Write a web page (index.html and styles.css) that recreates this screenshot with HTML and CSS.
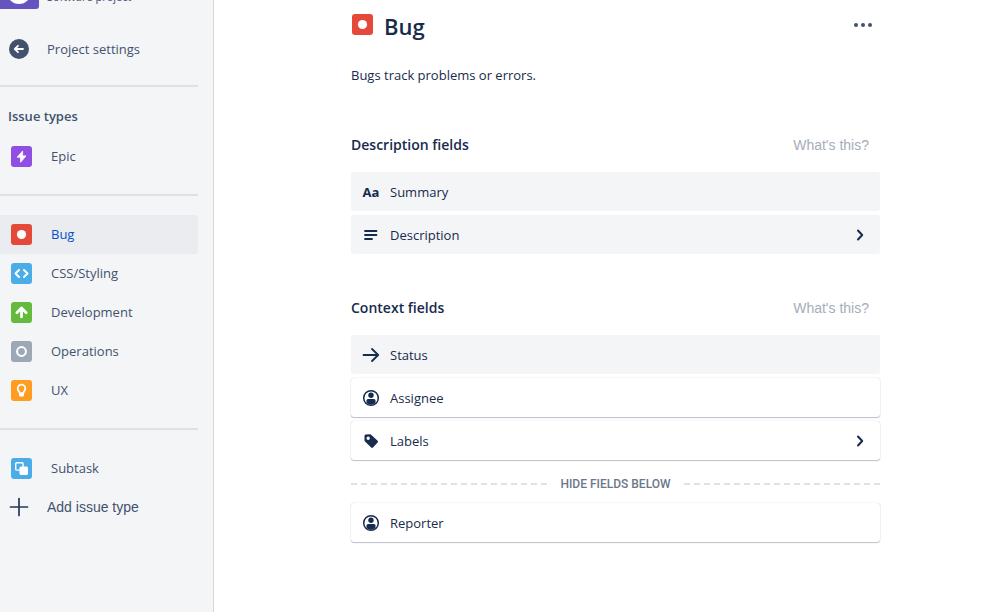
FILE: index.html
```
<!DOCTYPE html>
<html lang="en">
<head>
  <meta charset="UTF-8">
  <meta name="viewport" content="width=device-width, initial-scale=1.0">
  <title>Bug - Issue types</title>
  <link rel="stylesheet" href="styles.css">
</head>
<body>

  <!-- Sidebar -->
  <aside class="sidebar">
    <div class="project">
      <svg class="avatar" viewBox="0 0 39 39">
        <rect x="-3" width="42" height="39" rx="3" fill="#6554c0"/>
        <circle cx="19" cy="22" r="12" fill="#fff"/>
      </svg>
      <span>Software project</span>
    </div>

    <nav>
      <a class="nav-link" href="#">
        <svg viewBox="0 0 20 20">
          <circle cx="10" cy="10" r="10" fill="#42526e"/>
          <path d="M14 10H6.2M9 6.8L5.8 10L9 13.2" fill="none" stroke="#fff" stroke-width="1.8" stroke-linecap="round" stroke-linejoin="round"/>
        </svg>
        Project settings
      </a>
      <hr class="first">

      <h2>Issue types</h2>
      <a class="issue-type" href="#">
        <svg viewBox="0 0 21 21">
          <rect width="21" height="21" rx="3" fill="#904ee2"/>
          <path d="M11.6 5L6.2 11.2H9.6V16.3L15 9.9H11.6Z" fill="#fff" stroke="#fff" stroke-width=".8" stroke-linejoin="round"/>
        </svg>
        Epic
      </a>
      <hr>

      <a class="issue-type active" href="#">
        <svg viewBox="0 0 21 21">
          <rect width="21" height="21" rx="3" fill="#e5493a"/>
          <circle cx="10.5" cy="10.5" r="4.6" fill="#fff"/>
        </svg>
        Bug
      </a>
      <a class="issue-type" href="#">
        <svg viewBox="0 0 21 21">
          <rect width="21" height="21" rx="3" fill="#4bade8"/>
          <path d="M8 7L4.5 10.5L8 14M13 7L16.5 10.5L13 14" fill="none" stroke="#fff" stroke-width="2" stroke-linecap="round" stroke-linejoin="round"/>
        </svg>
        CSS/Styling
      </a>
      <a class="issue-type" href="#">
        <svg viewBox="0 0 21 21">
          <rect width="21" height="21" rx="3" fill="#63ba3c"/>
          <path d="M10.5 15V6.5M5.8 10.7L10.5 6L15.2 10.7" fill="none" stroke="#fff" stroke-width="2.7" stroke-linecap="round" stroke-linejoin="round"/>
        </svg>
        Development
      </a>
      <a class="issue-type" href="#">
        <svg viewBox="0 0 21 21">
          <rect width="21" height="21" rx="3" fill="#9ca8b5"/>
          <circle cx="10.5" cy="10.5" r="4.4" fill="none" stroke="#fff" stroke-width="2"/>
        </svg>
        Operations
      </a>
      <a class="issue-type" href="#">
        <svg viewBox="0 0 21 21">
          <rect width="21" height="21" rx="3" fill="#ff9d22"/>
          <path d="M8.7 13.2C8.7 11.6 6.7 11 6.7 8.5A3.8 3.8 0 0 1 14.3 8.5C14.3 11 12.3 11.6 12.3 13.2Z" fill="none" stroke="#fff" stroke-width="1.8" stroke-linejoin="round"/>
          <path d="M8 13.4H13V15Q13 16.5 11.5 16.5H9.5Q8 16.5 8 15Z" fill="#fff"/>
        </svg>
        UX
      </a>
      <hr>

      <a class="issue-type" href="#">
        <svg viewBox="0 0 21 21">
          <rect width="21" height="21" rx="3" fill="#4bade8"/>
          <rect x="4.7" y="4.7" width="7.4" height="7.4" rx="1" fill="none" stroke="#fff" stroke-width="1.4"/>
          <rect x="8.5" y="8.5" width="8.5" height="8.5" rx="1.5" fill="#fff"/>
        </svg>
        Subtask
      </a>
      <button class="nav-link" type="button">
        <svg viewBox="0 0 20 20">
          <path d="M10 1.5V18.5M1.5 10H18.5" stroke="#253858" stroke-width="1.7" stroke-linecap="round"/>
        </svg>
        Add issue type
      </button>
    </nav>
  </aside>

  <!-- Issue type fields -->
  <main>
    <header>
      <svg class="type-icon" viewBox="0 0 21 21">
        <rect width="21" height="21" rx="3" fill="#e5493a"/>
        <circle cx="10.5" cy="10.5" r="4.6" fill="#fff"/>
      </svg>
      <h1>Bug</h1>
      <button class="more" type="button" aria-label="More actions">
        <svg viewBox="0 0 20 20" fill="#42526e">
          <circle cx="3" cy="10" r="2"/>
          <circle cx="10" cy="10" r="2"/>
          <circle cx="17" cy="10" r="2"/>
        </svg>
      </button>
    </header>
    <p class="intro">Bugs track problems or errors.</p>

    <section>
      <div class="section-head">
        <h3>Description fields</h3>
        <button type="button">What's this?</button>
      </div>
      <div class="field locked">
        <span class="text-icon">Aa</span>
        Summary
      </div>
      <div class="field locked">
        <svg viewBox="0 0 20 20">
          <path d="M4 6H15.5M4 10H15.5M4 14H11" stroke="#172b4d" stroke-width="1.8" stroke-linecap="round"/>
        </svg>
        Description
        <svg class="chevron" viewBox="0 0 20 20">
          <path d="M8 5.5L12.2 10L8 14.5"/>
        </svg>
      </div>
    </section>

    <section>
      <div class="section-head">
        <h3>Context fields</h3>
        <button type="button">What's this?</button>
      </div>
      <div class="field locked">
        <svg viewBox="0 0 20 20">
          <path d="M2.5 10H17.2M11 4L17.2 10L11 16" fill="none" stroke="#172b4d" stroke-width="1.8" stroke-linecap="round" stroke-linejoin="round"/>
        </svg>
        Status
      </div>
      <div class="field">
        <svg viewBox="0 0 20 20">
          <circle cx="10" cy="10" r="7.3" fill="none" stroke="#172b4d" stroke-width="1.5"/>
          <circle cx="10" cy="7.2" r="2.7" fill="#172b4d"/>
          <path d="M5.5 15V12.5Q5.5 11 7 11H13Q14.5 11 14.5 12.5V15Q10 18.5 5.5 15Z" fill="#172b4d"/>
        </svg>
        Assignee
      </div>
      <div class="field">
        <svg viewBox="0 0 20 20">
          <path fill-rule="evenodd" fill="#172b4d" d="M3.5 5Q3.5 3.8 4.7 3.6L9 3.3Q9.8 3.3 10.4 3.9L16.6 9.8Q17.5 10.7 16.6 11.6L12 16.6Q11.1 17.4 10.2 16.6L4 10.5Q3.5 10 3.5 9.2ZM7.2 5.6A1.7 1.7 0 1 0 7.2 9A1.7 1.7 0 1 0 7.2 5.6Z"/>
        </svg>
        Labels
        <svg class="chevron" viewBox="0 0 20 20">
          <path d="M8 5.5L12.2 10L8 14.5"/>
        </svg>
      </div>
      <div class="divider">Hide fields below</div>
      <div class="field">
        <svg viewBox="0 0 20 20">
          <circle cx="10" cy="10" r="7.3" fill="none" stroke="#172b4d" stroke-width="1.5"/>
          <circle cx="10" cy="7.2" r="2.7" fill="#172b4d"/>
          <path d="M5.5 15V12.5Q5.5 11 7 11H13Q14.5 11 14.5 12.5V15Q10 18.5 5.5 15Z" fill="#172b4d"/>
        </svg>
        Reporter
      </div>
    </section>
  </main>

</body>
</html>
```
FILE: styles.css
```
* {
  box-sizing: border-box;
}

body {
  margin: 0;
  display: flex;
  min-height: 100vh;
  overflow: hidden;
  font-family: 'Open Sans', 'Noto Sans', sans-serif;
  font-size: 13px;
  line-height: 20px;
  color: #172b4d;
  background: #fff;
}

h1, h2, h3, p {
  margin: 0;
}

button {
  border: none;
  padding: 0;
  background: none;
  font-family: 'Liberation Sans', Arial, sans-serif;
  font-size: 14px;
  cursor: pointer;
}

svg {
  display: block;
  flex: none;
}

/* Sidebar */
.sidebar {
  flex: none;
  width: 214px;
  padding-right: 15px;
  background: #f4f5f7;
  border-right: 1px solid #d5d7db;
  color: #42526e;
}

/* project header is scrolled partly out of view */
.project {
  display: flex;
  align-items: center;
  gap: 8px;
  height: 39px;
  margin-top: -30px;
  margin-bottom: 21px;
  padding-top: 14px;
  font-size: 11px;
}

.project .avatar {
  width: 39px;
  height: 39px;
  margin-top: -14px;
}

.nav-link, .issue-type {
  display: flex;
  align-items: center;
  height: 39px;
  padding-bottom: 1px;
  color: #42526e;
  text-decoration: none;
}

.nav-link {
  padding-left: 9px;
  gap: 18px;
}

.nav-link svg {
  width: 20px;
  height: 20px;
}

.issue-type {
  padding-left: 11px;
  gap: 19px;
  border-radius: 0 3px 3px 0;
}

.issue-type svg {
  width: 21px;
  height: 21px;
}

.issue-type.active {
  background: #ebecf0;
  color: #0052cc;
}

.sidebar hr {
  height: 2px;
  margin: 18px 0 19px;
  border: none;
  background: #dfe1e6;
}

.sidebar hr.first {
  margin-top: 16px;
}

.sidebar h2 {
  margin-bottom: 11px;
  padding-left: 8px;
  font-size: 13px;
  font-weight: 600;
}

/* Main content */
main {
  flex: 1;
  padding: 0 119px 40px 137px;
}

header {
  display: flex;
  align-items: center;
  height: 52px;
}

.type-icon {
  width: 21px;
  height: 21px;
  margin: 0 11px 3px 1px;
}

h1 {
  font-size: 22px;
  font-weight: 600;
}

.more {
  margin: 0 7px 3px auto;
}

.more svg {
  width: 20px;
  height: 20px;
}

.intro {
  margin-top: 13px;
}

section {
  margin-top: 50px;
}

section + section {
  margin-top: 44px;
}

.section-head {
  display: flex;
  align-items: center;
  justify-content: space-between;
  margin-bottom: 17px;
  padding-right: 11px;
}

.section-head h3 {
  font-size: 14px;
  font-weight: 600;
}

.section-head button {
  color: #a5adba;
}

.field {
  display: flex;
  align-items: center;
  gap: 9px;
  height: 39px;
  margin-bottom: 4px;
  padding: 0 10px;
  border-radius: 3px;
  background: #fff;
  box-shadow: 0 1px 1px rgba(9, 30, 66, 0.25), 0 0 1px rgba(9, 30, 66, 0.31);
}

.field.locked {
  background: #f4f5f7;
  box-shadow: none;
}

.field svg, .text-icon {
  width: 20px;
  height: 20px;
}

.text-icon {
  font-weight: 700;
  text-align: center;
}

.field .chevron {
  margin-left: auto;
  fill: none;
  stroke: #172b4d;
  stroke-width: 2;
  stroke-linecap: round;
  stroke-linejoin: round;
}

.divider {
  display: flex;
  align-items: center;
  gap: 9px;
  height: 20px;
  margin: 14px 0 9px;
  font-family: Roboto, sans-serif;
  font-size: 12px;
  font-weight: 500;
  text-transform: uppercase;
  color: #6b778c;
}

.divider::before, .divider::after {
  content: "";
  flex: 1;
  height: 2px;
  background: repeating-linear-gradient(90deg, #dfe1e6 0 6px, transparent 6px 10px);
}

.divider::after {
  background: repeating-linear-gradient(270deg, #dfe1e6 0 6px, transparent 6px 10px);
}
```
